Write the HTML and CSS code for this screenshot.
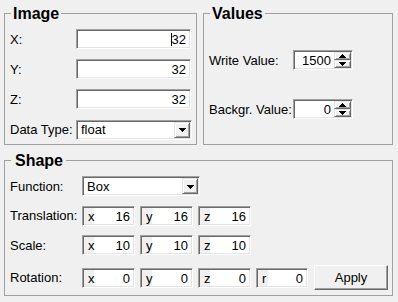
FILE: index.html
```html
<!DOCTYPE html>
<html>
<head>
<meta charset="utf-8">
<link rel="stylesheet" href="styles.css">
</head>
<body>
<div class="app">
  <div class="top">
    <fieldset class="group image">
      <legend>Image</legend>
      <div class="form">
        <span class="lbl">X:</span>
        <div class="edit sunken"><span class="caret"></span>32</div>
        <span class="lbl">Y:</span>
        <div class="edit sunken">32</div>
        <span class="lbl">Z:</span>
        <div class="edit sunken">32</div>
        <span class="lbl">Data Type:</span>
        <div class="combo sunken data">
          <span class="combo-text">float</span>
          <span class="drop raised"><svg width="7" height="4" viewBox="0 0 7 4"><path d="M0 0h7v1h-1v1h-1v1h-1v1h-1v-1h-1v-1h-1v-1h-1z"/></svg></span>
        </div>
      </div>
    </fieldset>
    <fieldset class="group values">
      <legend>Values</legend>
      <div class="vform">
        <span class="lbl">Write Value:</span>
        <div class="spin sunken">
          <span class="spin-val">1500</span>
          <div class="spin-btns">
            <span class="sbtn raised"><svg width="7" height="4" viewBox="0 0 7 4"><path d="M3 0h1v1h1v1h1v1h1v1H0V3h1V2h1V1h1z"/></svg></span>
            <span class="sbtn raised"><svg width="7" height="4" viewBox="0 0 7 4"><path d="M0 0h7v1H6v1H5v1H4v1H3V3H2V2H1V1H0z"/></svg></span>
          </div>
        </div>
        <span class="lbl">Backgr. Value:</span>
        <div class="spin sunken">
          <span class="spin-val">0</span>
          <div class="spin-btns">
            <span class="sbtn raised"><svg width="7" height="4" viewBox="0 0 7 4"><path d="M3 0h1v1h1v1h1v1h1v1H0V3h1V2h1V1h1z"/></svg></span>
            <span class="sbtn raised"><svg width="7" height="4" viewBox="0 0 7 4"><path d="M0 0h7v1H6v1H5v1H4v1H3V3H2V2H1V1H0z"/></svg></span>
          </div>
        </div>
      </div>
    </fieldset>
  </div>
  <fieldset class="group shape">
    <legend>Shape</legend>
    <div class="sform">
      <span class="lbl">Function:</span>
      <div class="combo sunken func">
        <span class="combo-text">Box</span>
        <span class="drop raised"><svg width="7" height="4" viewBox="0 0 7 4"><path d="M0 0h7v1h-1v1h-1v1h-1v1h-1v-1h-1v-1h-1v-1h-1z"/></svg></span>
      </div>

      <span class="lbl">Translation:</span>
      <div class="vecs">
        <div class="vec sunken"><span class="axis">x</span><span class="num">16</span></div>
        <div class="vec sunken"><span class="axis">y</span><span class="num">16</span></div>
        <div class="vec sunken"><span class="axis">z</span><span class="num">16</span></div>
      </div>

      <span class="lbl">Scale:</span>
      <div class="vecs">
        <div class="vec sunken"><span class="axis">x</span><span class="num">10</span></div>
        <div class="vec sunken"><span class="axis">y</span><span class="num">10</span></div>
        <div class="vec sunken"><span class="axis">z</span><span class="num">10</span></div>
      </div>

      <span class="lbl">Rotation:</span>
      <div class="vecs rot">
        <div class="vec sunken"><span class="axis">x</span><span class="num">0</span></div>
        <div class="vec sunken"><span class="axis">y</span><span class="num">0</span></div>
        <div class="vec sunken"><span class="axis">z</span><span class="num">0</span></div>
        <div class="vec sunken r"><span class="axis">r</span><span class="num">0</span></div>
        <button class="btn">Apply</button>
      </div>
    </div>
  </fieldset>
</div>
</body>
</html>
```

FILE: styles.css
```css
html, body {
  margin: 0;
  padding: 0;
  background: #f0f0f0;
}

body {
  width: 398px;
  height: 302px;
  overflow: hidden;
  font: 13px/15px "Liberation Sans", Arial, sans-serif;
  color: #000;
}

.app {
  padding: 4px 5px 0 4px;
}

.top {
  display: flex;
  gap: 6px;
}

.group {
  margin: 0;
  border: 1px solid #a0a0a0;
  min-width: 0;
  box-sizing: border-box;
}

.group legend {
  font: bold 16px/19px "Liberation Sans", Arial, sans-serif;
  padding: 0 2px;
  margin-left: 1px;
}

.shape legend {
  padding: 0 3px 0 4px;
}

.image {
  width: 193px;
  padding: 6px 4px 5px 5px;
}

.values {
  flex: 1;
  padding: 27px 4px 5px 5px;
}

.shape {
  margin-top: 6px;
  padding: 6px 4px 5px 5px;
}

.lbl {
  white-space: nowrap;
}

/* sunken / raised 3D frames */
.sunken {
  background: #fff;
  border: 1px solid;
  border-color: #a0a0a0 #fff #fff #a0a0a0;
  box-shadow: inset 1px 1px #696969, inset -1px -1px #e3e3e3;
  box-sizing: border-box;
}

.raised {
  background: #f0f0f0;
  border: 1px solid;
  border-color: #e3e3e3 #696969 #696969 #e3e3e3;
  box-shadow: inset 1px 1px #fff, inset -1px -1px #a0a0a0;
  box-sizing: border-box;
}

/* Image form */
.form {
  display: grid;
  grid-template-columns: 66px 115px;
  grid-auto-rows: 20px;
  row-gap: 10px;
  align-items: center;
}

.edit {
  height: 20px;
  display: flex;
  align-items: center;
  justify-content: flex-end;
  padding-right: 4px;
}

.caret {
  width: 1px;
  height: 13px;
  background: #000;
}

.combo {
  height: 20px;
  display: flex;
  align-items: center;
  padding: 1px;
}

.combo.data {
  width: 116px;
  margin-top: 1px;
}

.combo.func {
  width: 118px;
}

.combo-text {
  flex: 1;
  padding-left: 3px;
}

.drop {
  width: 16px;
  height: 16px;
  display: flex;
  align-items: center;
  justify-content: center;
  padding-top: 1px;
}

.drop svg,
.sbtn svg {
  display: block;
  fill: #000;
}

/* Values form */
.vform {
  display: grid;
  grid-template-columns: 84px 60px;
  grid-auto-rows: 20px;
  row-gap: 29px;
  align-items: center;
}

.spin {
  width: 60px;
  height: 20px;
  padding: 1px;
  display: flex;
}

.spin-val {
  flex: 1;
  text-align: right;
  padding-right: 3px;
  line-height: 18px;
}

.spin-btns {
  width: 17px;
  display: flex;
  flex-direction: column;
}

.sbtn {
  height: 9px;
  display: flex;
  align-items: center;
  justify-content: center;
}

/* Shape form */
.sform {
  display: grid;
  grid-template-columns: 72px auto;
  align-items: center;
  row-gap: 9px;
}

.sform > .lbl:nth-of-type(3),
.sform > .vecs:nth-of-type(2) {
  margin-top: 1px;
}

.vecs {
  display: flex;
  gap: 5px;
  align-items: center;
}

.vecs.rot {
  margin-top: 1px;
}

.vec {
  width: 53px;
  height: 20px;
  display: flex;
  padding: 1px;
}

.vec.r {
  width: 52px;
}

.axis {
  width: 10px;
  padding-left: 4px;
  box-sizing: border-box;
  background: #f0f0f0;
  line-height: 18px;
}

.num {
  flex: 1;
  text-align: right;
  padding-right: 3px;
  line-height: 18px;
}

.btn {
  width: 74px;
  height: 25px;
  margin-left: 1px;
  font: 13px "Liberation Sans", Arial, sans-serif;
  color: #000;
  background: #f0f0f0;
  border: 1px solid;
  border-color: #fff #696969 #696969 #fff;
  box-shadow: inset -1px -1px #a0a0a0;
  padding: 0;
}
```
